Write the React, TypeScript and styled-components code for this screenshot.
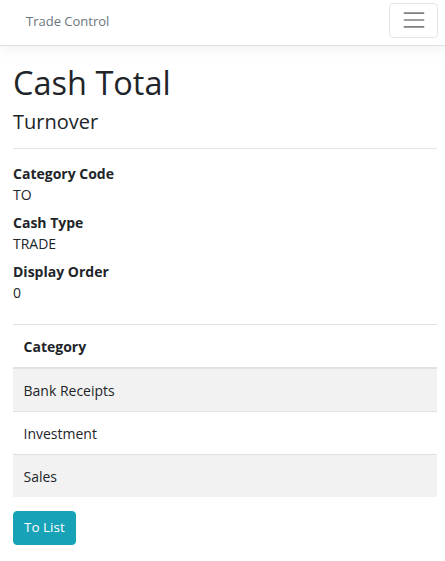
import React from "react";
import styled, { createGlobalStyle } from "styled-components";

const Global = createGlobalStyle`
  html { font-size: 14px; }
  body {
    margin: 0;
    font-family: "Open Sans", "Noto Sans", sans-serif;
    font-size: 14px;
    line-height: 1.5;
    color: #212529;
    background: #fff;
  }
  * { box-sizing: border-box; }
`;

const NavBar = styled.header`
  display: flex;
  align-items: center;
  justify-content: space-between;
  height: 46px;
  padding: 0 7px 0 26px;
  border-bottom: 1px solid #dee2e6;
  box-shadow: 0 4px 12px rgba(0, 0, 0, 0.05);
  background: #fff;
`;

const Brand = styled.a`
  font-size: 13px;
  color: #6c757d;
  text-decoration: none;
  line-height: 1;
  margin-top: -3px;
`;

const Toggler = styled.button`
  width: 49px;
  height: 35px;
  margin-top: -5px;
  display: flex;
  align-items: center;
  justify-content: center;
  background: transparent;
  border: 1px solid rgba(0, 0, 0, 0.1);
  border-radius: 4px;
  padding: 0;
`;

const Main = styled.main`
  padding: 14px 8px 16px 13px;
`;

const Title = styled.h1`
  margin: 2px 0 5px;
  font-size: 32.5px;
  font-weight: 400;
  line-height: 42px;
`;

const Subtitle = styled.h4`
  margin: 0;
  font-size: 20px;
  font-weight: 400;
  line-height: 25px;
`;

const Rule = styled.hr`
  margin: 14px 0;
  border: 0;
  border-top: 1px solid rgba(0, 0, 0, 0.1);
`;

const Details = styled.dl`
  margin: 0 0 21px;
`;

const Term = styled.dt`
  font-weight: 700;
  line-height: 21px;
`;

const Value = styled.dd`
  margin: 0 0 7px;
  line-height: 21px;
`;

const Table = styled.table`
  width: 100%;
  border-collapse: collapse;
  margin-bottom: 14px;
`;

const HeadCell = styled.th`
  text-align: left;
  padding: 10.5px;
  line-height: 21px;
  font-weight: 700;
  border-top: 1px solid #dee2e6;
  border-bottom: 2px solid #dee2e6;
`;

const Row = styled.tr<{ $striped: boolean }>`
  background: ${(p) => (p.$striped ? "rgba(0,0,0,0.05)" : "transparent")};
`;

const Cell = styled.td`
  padding: 10.5px;
  line-height: 21px;
  border-top: 1px solid #dee2e6;
`;

const InfoButton = styled.a`
  display: inline-block;
  padding: 5.25px 10px;
  font-size: 13.5px;
  line-height: 21px;
  color: #fff;
  background: #17a2b8;
  border: 1px solid #17a2b8;
  border-radius: 4px;
  text-decoration: none;
`;

const BurgerIcon = () => (
  <svg width="26" height="26" viewBox="0 0 30 30" aria-hidden>
    <path
      stroke="rgba(0,0,0,0.5)"
      strokeLinecap="round"
      strokeMiterlimit="10"
      strokeWidth="2"
      d="M4 7h22M4 15h22M4 23h22"
    />
  </svg>
);

const details: [string, string][] = [
  ["Category Code", "TO"],
  ["Cash Type", "TRADE"],
  ["Display Order", "0"],
];

const categories = ["Bank Receipts", "Investment", "Sales"];

export default function App() {
  return (
    <>
      <Global />
      <NavBar>
        <Brand href="#">Trade Control</Brand>
        <Toggler type="button" aria-label="Toggle navigation">
          <BurgerIcon />
        </Toggler>
      </NavBar>
      <Main>
        <Title>Cash Total</Title>
        <Subtitle>Turnover</Subtitle>
        <Rule />
        <Details>
          {details.map(([t, v]) => (
            <React.Fragment key={t}>
              <Term>{t}</Term>
              <Value>{v}</Value>
            </React.Fragment>
          ))}
        </Details>
        <Table>
          <thead>
            <tr>
              <HeadCell>Category</HeadCell>
            </tr>
          </thead>
          <tbody>
            {categories.map((c, i) => (
              <Row key={c} $striped={i % 2 === 0}>
                <Cell>{c}</Cell>
              </Row>
            ))}
          </tbody>
        </Table>
        <InfoButton href="#">To List</InfoButton>
      </Main>
    </>
  );
}
